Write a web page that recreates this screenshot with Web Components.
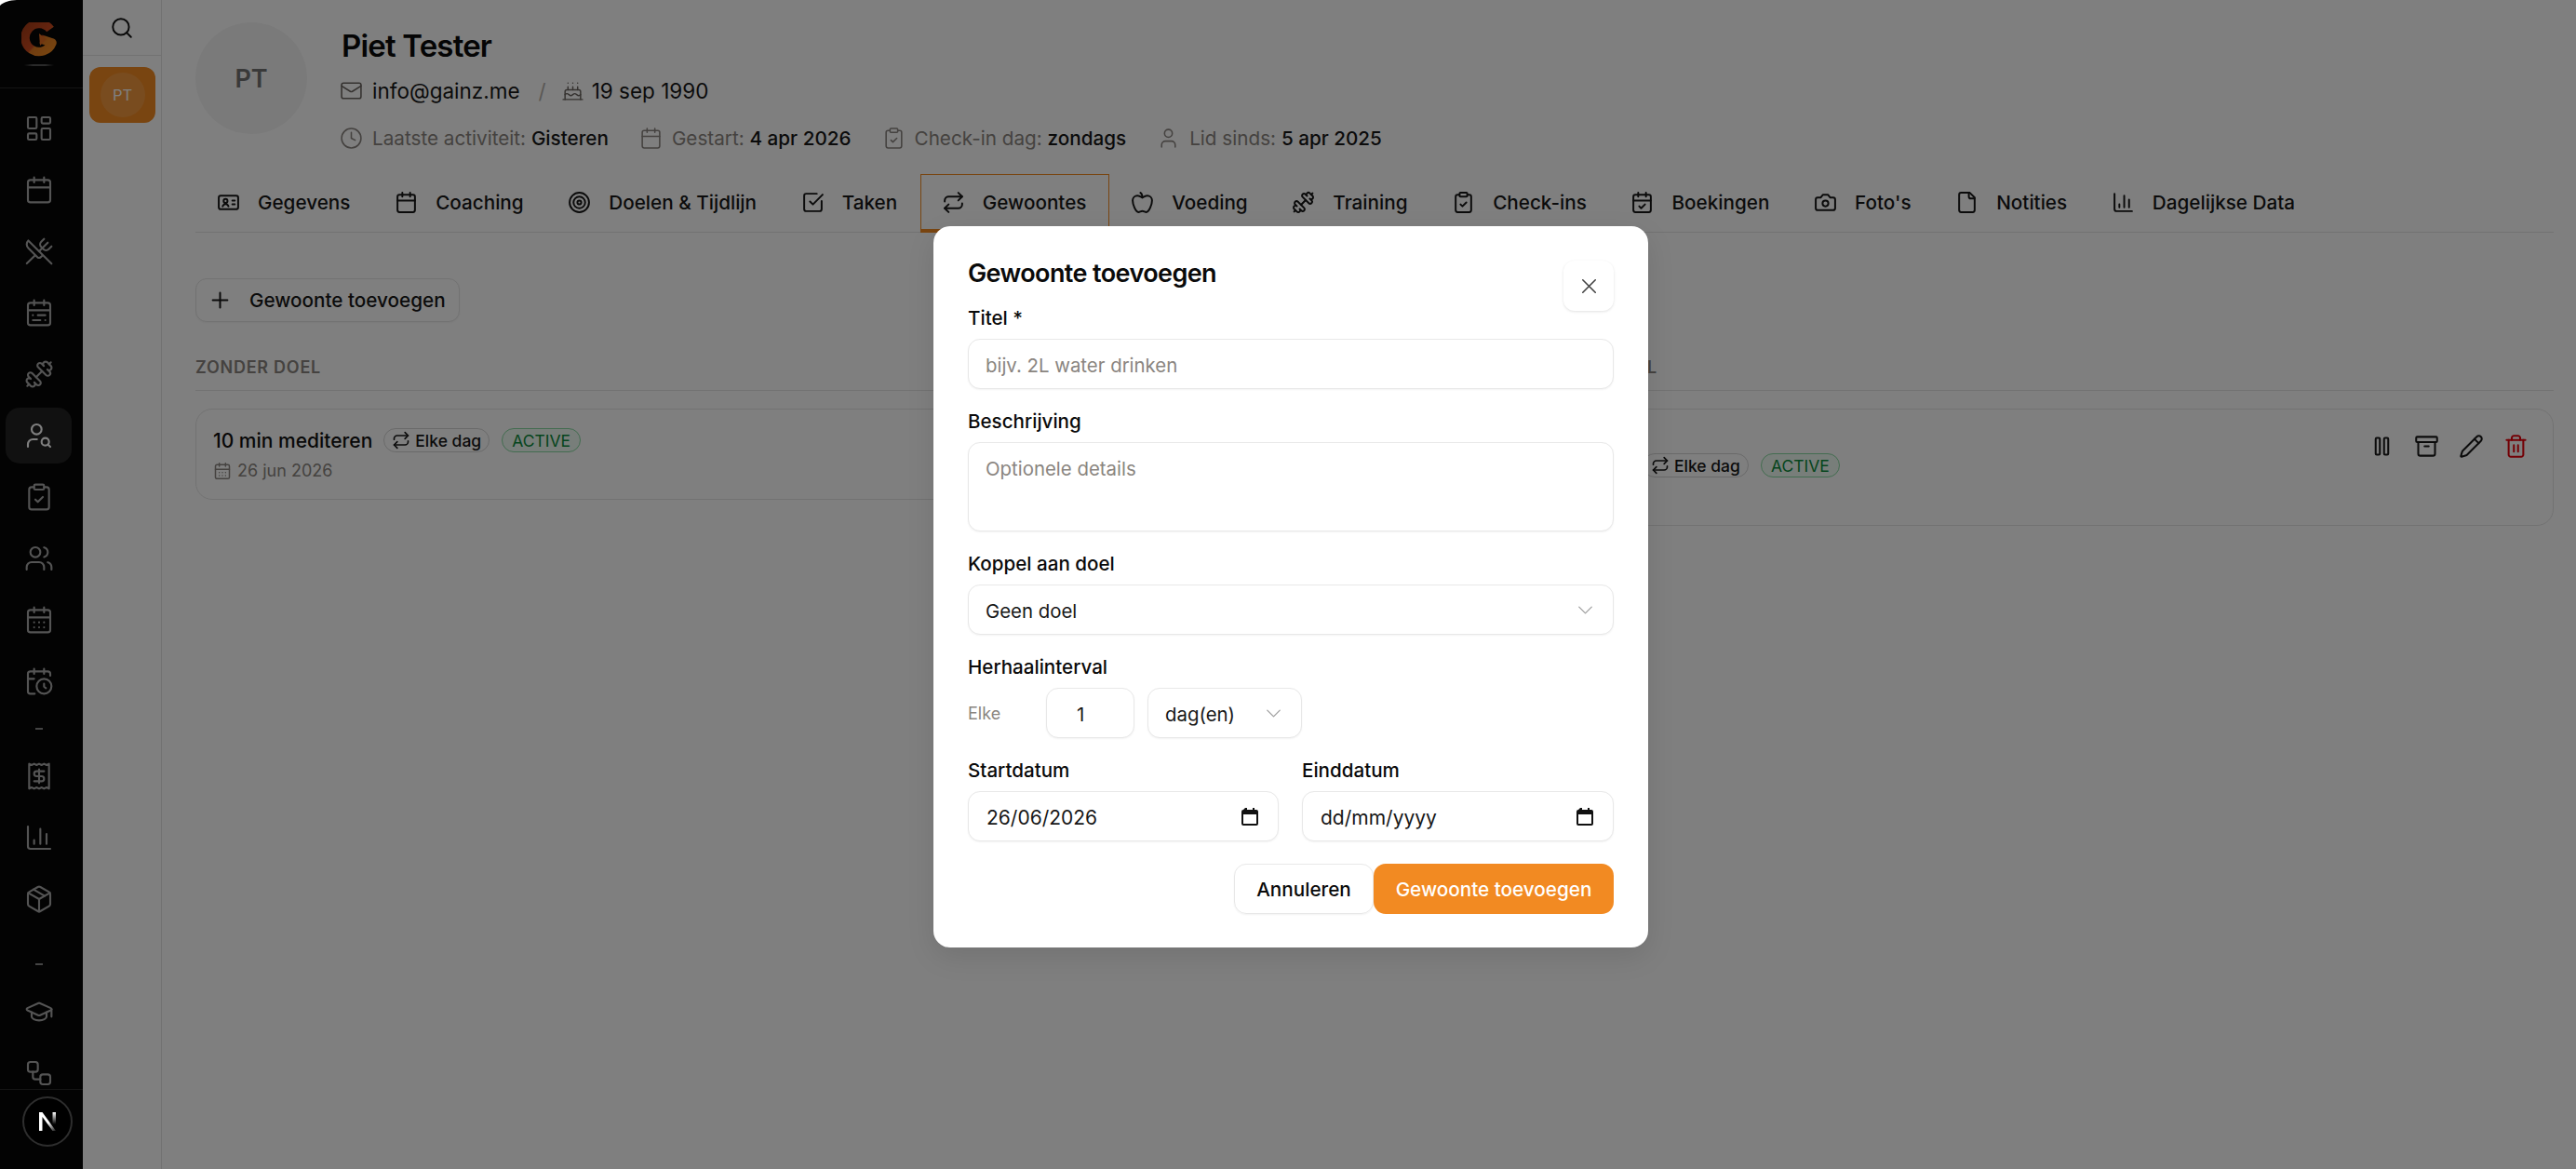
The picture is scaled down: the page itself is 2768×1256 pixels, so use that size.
<!DOCTYPE html>
<html lang="nl">
<head>
<meta charset="utf-8">
<title>Piet Tester</title>
<style>
  html, body { margin: 0; height: 100%; background: #fff; overflow: hidden; }
  body { font-family: Inter, "Liberation Sans", sans-serif; color: #111; }
</style>
</head>
<body>
<client-page></client-page>

<script>
(() => {
  // lucide style icons, 24 grid
  const ICONS = {
    dashboard: '<rect x="3" y="3" width="7" height="9" rx="1"/><rect x="14" y="3" width="7" height="5" rx="1"/><rect x="14" y="12" width="7" height="9" rx="1"/><rect x="3" y="16" width="7" height="5" rx="1"/>',
    calendar: '<path d="M8 2v4M16 2v4M3 10h18"/><rect x="3" y="4" width="18" height="18" rx="2"/>',
    utensils: '<path d="m16 2-2.3 2.3a3 3 0 0 0 0 4.2l1.8 1.8a3 3 0 0 0 4.2 0L22 8"/><path d="M15 15 3.3 3.3a4.2 4.2 0 0 0 0 6l7.3 7.3c.7.7 2 .7 2.8 0L15 15Zm0 0 7 7"/><path d="m2.1 21.8 6.4-6.3"/><path d="m19 5-7 7"/>',
    range: '<rect x="3" y="4" width="18" height="18" rx="2"/><path d="M16 2v4M3 10h18M8 2v4M17 14h-6M13 18H7M7 14h.01M17 18h.01"/>',
    dumbbell: '<g transform="matrix(-1 0 0 1 24 0)"><path d="M14.4 14.4 9.6 9.6"/><path d="M18.657 21.485a2 2 0 1 1-2.829-2.828l-1.767 1.768a2 2 0 1 1-2.829-2.829l6.364-6.364a2 2 0 1 1 2.829 2.829l-1.768 1.767a2 2 0 1 1 2.828 2.829z"/><path d="m21.5 21.5-1.4-1.4"/><path d="M3.9 3.9 2.5 2.5"/><path d="M6.404 12.768a2 2 0 1 1-2.829-2.829l1.768-1.767a2 2 0 1 1-2.828-2.829l2.828-2.828a2 2 0 1 1 2.829 2.828l1.767-1.768a2 2 0 1 1 2.829 2.829z"/></g>',
    usersearch: '<circle cx="10" cy="7" r="4"/><path d="M10.3 15H7a4 4 0 0 0-4 4v2"/><circle cx="17" cy="17" r="3"/><path d="m21 21-1.9-1.9"/>',
    clipcheck: '<rect x="8" y="2" width="8" height="4" rx="1"/><path d="M16 4h2a2 2 0 0 1 2 2v14a2 2 0 0 1-2 2H6a2 2 0 0 1-2-2V6a2 2 0 0 1 2-2h2"/><path d="m9 14 2 2 4-4"/>',
    users: '<path d="M16 21v-2a4 4 0 0 0-4-4H6a4 4 0 0 0-4 4v2"/><circle cx="9" cy="7" r="4"/><path d="M22 21v-2a4 4 0 0 0-3-3.87"/><path d="M16 3.13a4 4 0 0 1 0 7.75"/>',
    days: '<path d="M8 2v4M16 2v4M3 10h18"/><rect x="3" y="4" width="18" height="18" rx="2"/><path d="M8 14h.01M12 14h.01M16 14h.01M8 18h.01M12 18h.01M16 18h.01"/>',
    calclock: '<path d="M21 7.5V6a2 2 0 0 0-2-2H5a2 2 0 0 0-2 2v14a2 2 0 0 0 2 2h3.5"/><path d="M16 2v4M8 2v4M3 10h5"/><path d="M17.5 17.5 16 16.3V14"/><circle cx="16" cy="16" r="6"/>',
    receipt: '<path d="M4 2v20l2-1 2 1 2-1 2 1 2-1 2 1 2-1 2 1V2l-2 1-2-1-2 1-2-1-2 1-2-1-2 1Z"/><path d="M16 8h-6a2 2 0 1 0 0 4h4a2 2 0 1 1 0 4H8"/><path d="M12 17.5v-11"/>',
    chart: '<path d="M3 3v16a2 2 0 0 0 2 2h16"/><path d="M18 17V9M13 17V5M8 17v-3"/>',
    package: '<path d="M11 21.73a2 2 0 0 0 2 0l7-4A2 2 0 0 0 21 16V8a2 2 0 0 0-1-1.73l-7-4a2 2 0 0 0-2 0l-7 4A2 2 0 0 0 3 8v8a2 2 0 0 0 1 1.73z"/><path d="M12 22V12"/><path d="M3.29 7 12 12l8.71-5"/><path d="m7.5 4.27 9 5.15"/>',
    cap: '<path d="M21.42 10.922a1 1 0 0 0-.019-1.838L12.83 5.18a2 2 0 0 0-1.66 0L2.6 9.08a1 1 0 0 0 0 1.832l8.57 3.908a2 2 0 0 0 1.66 0z"/><path d="M22 10v6"/><path d="M6 12.5V16a6 3 0 0 0 12 0v-3.5"/>',
    workflow: '<rect x="3" y="3" width="8" height="8" rx="2"/><path d="M7 11v4a2 2 0 0 0 2 2h4"/><rect x="13" y="13" width="8" height="8" rx="2"/>',
    search: '<circle cx="11" cy="11" r="8"/><path d="m21 21-4.3-4.3"/>',
    mail: '<rect x="2" y="4" width="20" height="16" rx="2"/><path d="m22 7-8.97 5.7a1.94 1.94 0 0 1-2.06 0L2 7"/>',
    cake: '<path d="M20 21v-8a2 2 0 0 0-2-2H6a2 2 0 0 0-2 2v8"/><path d="M4 16s.5-1 2-1 2.5 2 4 2 2.5-2 4-2 2.5 2 4 2 2-1 2-1"/><path d="M2 21h20M7 8v3M12 8v3M17 8v3M7 4h.01M12 4h.01M17 4h.01"/>',
    clock: '<circle cx="12" cy="12" r="10"/><path d="M12 6v6l4 2"/>',
    user: '<path d="M19 21v-2a4 4 0 0 0-4-4H9a4 4 0 0 0-4 4v2"/><circle cx="12" cy="7" r="4"/>',
    idcard: '<rect x="2" y="5" width="20" height="14" rx="2"/><circle cx="9" cy="10.5" r="2"/><path d="M6 16c.4-1.500 1.500-2.200 3-2.200s2.600.7 3 2.200M16 10h2.500M16 14h2.500"/>',
    target: '<circle cx="12" cy="12" r="10"/><circle cx="12" cy="12" r="6"/><circle cx="12" cy="12" r="2"/>',
    checkbox: '<path d="M21 10.5V19a2 2 0 0 1-2 2H5a2 2 0 0 1-2-2V5a2 2 0 0 1 2-2h11"/><path d="m9 11 3 3L22 4"/>',
    repeat: '<path d="m17 2 4 4-4 4"/><path d="M3 11v-1a4 4 0 0 1 4-4h14"/><path d="m7 22-4-4 4-4"/><path d="M21 13v1a4 4 0 0 1-4 4H3"/>',
    apple: '<path d="M12 20.94c1.5 0 2.75 1.06 4 1.06 3 0 6-8 6-12.22A4.91 4.91 0 0 0 17 5c-2.22 0-4 1.44-5 2-1-.56-2.78-2-5-2a4.9 4.9 0 0 0-5 4.78C2 14 5 22 8 22c1.25 0 2.5-1.06 4-1.06Z"/><path d="M10 2c1 .5 2 2 2 5"/>',
    calcheck: '<path d="M8 2v4M16 2v4M3 10h18"/><rect x="3" y="4" width="18" height="18" rx="2"/><path d="m9 16 2 2 4-4"/>',
    camera: '<path d="M14.5 4h-5L7 7H4a2 2 0 0 0-2 2v9a2 2 0 0 0 2 2h16a2 2 0 0 0 2-2V9a2 2 0 0 0-2-2h-3l-2.5-3z"/><circle cx="12" cy="13" r="3"/>',
    file: '<path d="M15 2H6a2 2 0 0 0-2 2v16a2 2 0 0 0 2 2h12a2 2 0 0 0 2-2V7Z"/><path d="M14 2v4a2 2 0 0 0 2 2h4"/>',
    plus: '<path d="M5 12h14M12 5v14"/>',
    x: '<path d="M18 6 6 18M6 6l12 12"/>',
    chevron: '<path d="m6 9 6 6 6-6"/>',
    pause: '<rect x="14" y="4" width="4" height="16" rx="1"/><rect x="6" y="4" width="4" height="16" rx="1"/>',
    archive: '<rect x="2" y="3" width="20" height="5" rx="1"/><path d="M4 8v11a2 2 0 0 0 2 2h12a2 2 0 0 0 2-2V8"/><path d="M10 12h4"/>',
    pencil: '<path d="M21.174 6.812a1 1 0 0 0-3.986-3.987L3.842 16.174a2 2 0 0 0-.5.83l-1.321 4.352a.5.5 0 0 0 .623.622l4.353-1.32a2 2 0 0 0 .83-.497z"/><path d="m15 5 4 4"/>',
    trash: '<path d="M3 6h18"/><path d="M19 6v14c0 1-1 2-2 2H7c-1 0-2-1-2-2V6"/><path d="M8 6V4c0-1 1-2 2-2h4c1 0 2 1 2 2v2"/><path d="M10 11v6M14 11v6"/>'
  };

  class GIcon extends HTMLElement {
    connectedCallback() {
      const size = this.getAttribute('size') || 27;
      const sw = this.getAttribute('sw') || 1.8;
      this.attachShadow({mode: 'open'}).innerHTML = `
        <style>:host{display:inline-flex;flex:none;width:${size}px;height:${size}px}svg{width:100%;height:100%;display:block}</style>
        <svg viewBox="0 0 24 24" fill="none" stroke="currentColor" stroke-width="${sw}" stroke-linecap="round" stroke-linejoin="round">${ICONS[this.getAttribute('name')]}</svg>`;
    }
  }
  customElements.define('g-icon', GIcon);

  class AppSidebar extends HTMLElement {
    constructor() {
      super();
      const item = (n, active) => `<div class="item ${active ? 'active' : ''}"><g-icon name="${n}" size="32" sw="1.600"></g-icon></div>`;
      this.attachShadow({mode: 'open'}).innerHTML = `
      <style>
        :host { display:flex; flex-direction:column; flex:none; width:89px; height:100%; background:#060606; color:#a8a8a8; }
        .logo { height:95px; box-sizing:border-box; border-bottom:1px solid #2a2a2a; display:flex; flex-direction:column; align-items:center; padding:24px 5px 0 0; position:relative; }
        .logo i { position:absolute; top:69px; left:26px; width:32px; height:2px; background:linear-gradient(90deg,transparent,#555 30%,#555 70%,transparent); }
        .list { flex:1; min-height:0; overflow:hidden; display:flex; flex-direction:column; gap:6px; padding:13px 12px 0 6px; }
        .item { flex:none; height:60px; border-radius:15px; display:flex; align-items:center; justify-content:center; }
        .item.active { background:#222; color:#fff; }
        .sep { flex:none; height:30px; display:flex; align-items:center; justify-content:center; }
        .sep.low { height:49px; box-sizing:border-box; padding-top:33px; align-items:flex-start; }
        .sep i { display:block; width:8px; height:2px; background:#888; }
        .foot { flex:none; height:85px; border-top:1px solid #2a2a2a; }
      </style>
      <div class="logo">
        <svg width="38" height="38" viewBox="0 0 38 38">
          <defs><linearGradient id="lg" x1="0" y1="0" x2="1" y2="1"><stop offset="0" stop-color="#a83c16"/><stop offset=".55" stop-color="#cc4a20"/><stop offset=".6" stop-color="#e07a20"/><stop offset="1" stop-color="#f08a20"/></linearGradient></defs>
          <path fill="none" stroke="url(#lg)" stroke-width="9.500" stroke-linejoin="round" d="M31 7.500A15 15 0 1 0 33 22L21 18"/>
          <path fill="#e06a20" d="M19 12 27 18 20 25z"/>
        </svg>
        <i></i>
      </div>
      <div class="list">
        ${item('dashboard')}${item('calendar')}${item('utensils')}${item('range')}${item('dumbbell')}${item('usersearch', true)}${item('clipcheck')}${item('users')}${item('days')}${item('calclock')}
        <div class="sep"><i></i></div>
        ${item('receipt')}${item('chart')}${item('package')}
        <div class="sep low"><i></i></div>
        ${item('cap')}${item('workflow')}
      </div>
      <div class="foot"></div>`;
    }
  }
  customElements.define('app-sidebar', AppSidebar);

  class ClientRail extends HTMLElement {
    constructor() {
      super();
      this.attachShadow({mode: 'open'}).innerHTML = `
      <style>
        :host { display:flex; flex-direction:column; flex:none; width:85px; height:100%; box-sizing:border-box; border-right:1px solid #e5e5e5; background:#fff; }
        .top { height:60px; box-sizing:border-box; border-bottom:1px solid #e5e5e5; display:flex; align-items:center; justify-content:center; color:#111; }
        .chip { margin:12px 0 0 7px; width:71px; height:60px; border-radius:12px; background:#f28a22; display:flex; align-items:center; justify-content:center; }
        .av { width:48px; height:48px; border-radius:50%; background:#ffffff22; display:flex; align-items:center; justify-content:center; font-size:16.500px; font-weight:400; color:#fff; }
      </style>
      <div class="top"><g-icon name="search" size="26" sw="1.800"></g-icon></div>
      <div class="chip"><div class="av">PT</div></div>`;
    }
  }
  customElements.define('client-rail', ClientRail);

  class ClientHeader extends HTMLElement {
    constructor() {
      super();
      this.attachShadow({mode: 'open'}).innerHTML = `
      <style>
        :host { display:flex; gap:37px; height:187px; box-sizing:border-box; padding:24px 0 0 36px; }
        .avatar { width:120px; height:120px; border-radius:50%; background:#f5f5f5; color:#737373; display:flex; align-items:center; justify-content:center; font-size:27px; font-weight:600; flex:none; }
        h1 { margin:1px 0 0; font-size:33px; line-height:48px; font-weight:600; letter-spacing:-.825px; color:#0a0a0a; }
        .row { display:flex; align-items:center; }
        .contact { margin-top:1px; height:46px; font-size:22.500px; color:#171717; }
        .contact g-icon { color:#6b6560; margin:0 10px 0 -2px; }
        .contact g-icon + .slash + g-icon { margin-right:8px; }
        .slash { color:#b5b0aa; margin:0 18px 0 20px; }
        .meta { margin-top:10px; height:36px; font-size:20.700px; color:#8a8580; }
        .meta g-icon { margin:0 10px 0 -2px; }
        .meta span { margin-right:35px; white-space:pre; }
        .meta b { font-weight:500; color:#171717; }
      </style>
      <div class="avatar">PT</div>
      <div>
        <h1>Piet Tester</h1>
        <div class="row contact"><g-icon name="mail" size="25" sw="1.500"></g-icon>info@gainz.me<span class="slash">/</span><g-icon name="cake" size="25" sw="1.400"></g-icon>19 sep 1990</div>
        <div class="row meta">
          <g-icon name="clock" size="25" sw="1.500"></g-icon><span>Laatste activiteit: <b>Gisteren</b></span>
          <g-icon name="calendar" size="25" sw="1.500"></g-icon><span>Gestart: <b>4 apr 2026</b></span>
          <g-icon name="clipcheck" size="25" sw="1.500"></g-icon><span>Check-in dag: <b>zondags</b></span>
          <g-icon name="user" size="25" sw="1.500"></g-icon><span>Lid sinds: <b>5 apr 2025</b></span>
        </div>
      </div>`;
    }
  }
  customElements.define('client-header', ClientHeader);

  class TabItem extends HTMLElement {
    constructor() {
      super();
      this.attachShadow({mode: 'open'}).innerHTML = `
      <style>
        :host { display:flex; align-items:center; gap:19px; height:63px; box-sizing:border-box; padding:0 23.700px 3px 22px; border:1px solid transparent; border-bottom:0; font-size:20.700px; font-weight:500; color:#171717; white-space:nowrap; margin-bottom:-1px; }
        :host([active]) { border-color:#f28a22; box-shadow:inset 0 -4px 0 #f28a22; }
      </style>
      <g-icon name="${this.getAttribute('icon')}" size="25" sw="1.900"></g-icon><slot></slot>`;
    }
  }
  customElements.define('tab-item', TabItem);

  class TabBar extends HTMLElement {
    constructor() {
      super();
      this.attachShadow({mode: 'open'}).innerHTML = `
      <style>:host { display:flex; margin:0 24px 0 36px; border-bottom:1px solid #e5e5e5; height:63px; box-sizing:border-box; }</style>
      <slot></slot>`;
    }
  }
  customElements.define('tab-bar', TabBar);

  class StatusChip extends HTMLElement {
    constructor() {
      super();
      this.attachShadow({mode: 'open'}).innerHTML = `
      <style>
        :host { display:inline-flex; align-items:center; gap:5px; height:26px; box-sizing:border-box; padding:0 8px; border-radius:13px; border:1px solid #d4d4d4; font-size:17.500px; font-weight:500; color:#171717; }
        :host([green]) { border-color:#86d9a0; background:#f0fdf4; color:#0a8a3a; padding:0 10px; font-weight:400; }
      </style><slot></slot>`;
    }
  }
  customElements.define('status-chip', StatusChip);

  class HabitCard extends HTMLElement {
    constructor() {
      super();
      this.attachShadow({mode: 'open'}).innerHTML = `
      <style>
        :host { display:block; box-sizing:border-box; border:1px solid #e5e5e5; border-radius:18px; padding:20px 18px; position:relative; }
        .actions { display:flex; position:absolute; top:15px; right:16px; }
        .actions span { width:48px; height:48px; display:flex; align-items:center; justify-content:center; color:#171717; }
        .actions .del { color:#e7000b; }
        :host(:not([actions])) .actions { display:none; }
      </style>
      <slot></slot>
      <div class="actions">
        <span><g-icon name="pause"></g-icon></span><span><g-icon name="archive"></g-icon></span><span><g-icon name="pencil"></g-icon></span><span class="del"><g-icon name="trash"></g-icon></span>
      </div>`;
    }
  }
  customElements.define('habit-card', HabitCard);

  class HabitColumn extends HTMLElement {
    constructor() {
      super();
      const end = this.getAttribute('heading-end');
      this.attachShadow({mode: 'open'}).innerHTML = `
      <style>
        :host { display:block; }
        h2 { margin:0 0 19px; font-size:18px; line-height:48px; height:48px; font-weight:600; letter-spacing:.75px; color:#8a8580; border-bottom:1px solid #e5e5e5; white-space:nowrap; }
        h2 span { display:inline-block; ${end ? `width:${end}px; text-align:right;` : ''} }
      </style>
      <h2><span>${this.getAttribute('heading')}</span></h2><slot></slot>`;
    }
  }
  customElements.define('habit-column', HabitColumn);

  class HabitsPanel extends HTMLElement {
    constructor() {
      super();
      this.attachShadow({mode: 'open'}).innerHTML = `
      <style>
        :host { display:block; margin:0 24px 0 36px; padding-top:49px; }
        .add { display:inline-flex; align-items:center; gap:18px; height:47px; box-sizing:border-box; padding:0 14px 0 12px; border:1px solid #e5e5e5; border-radius:12px; background:#fff; font-size:20.700px; font-weight:500; color:#171717; box-shadow:0 1px 2px #0000000d; vertical-align:top; }
        .cols { display:grid; grid-template-columns:1fr 1fr; gap:36px; margin-top:25px; align-items:start; }
      </style>
      <div class="add"><g-icon name="plus"></g-icon>Gewoonte toevoegen</div>
      <div class="cols"><slot></slot></div>`;
    }
  }
  customElements.define('habits-panel', HabitsPanel);

  class FormField extends HTMLElement {
    constructor() {
      super();
      const label = this.getAttribute('label');
      this.attachShadow({mode: 'open'}).innerHTML = `
      <style>
        :host { display:block; }
        label { display:block; height:30px; line-height:30px; margin-bottom:7px; font-size:20.600px; font-weight:500; color:#0a0a0a; }
      </style>
      <label>${label}</label><slot></slot>`;
    }
  }
  customElements.define('form-field', FormField);

  class FormBox extends HTMLElement {
    constructor() {
      super();
      const kind = this.getAttribute('kind');
      const end = kind === 'select'
        ? '<g-icon name="chevron" sw="1.200" style="color:#a3a3a3"></g-icon>'
        : kind === 'date'
          ? '<svg width="22" height="22" viewBox="0 0 22 22"><path fill="#111" d="M6 2h2v2h6V2h2v2h2a2 2 0 0 1 2 2v13a2 2 0 0 1-2 2H4a2 2 0 0 1-2-2V6a2 2 0 0 1 2-2zM4 9v10h14V9z"/></svg>'
          : '';
      this.attachShadow({mode: 'open'}).innerHTML = `
      <style>
        :host { display:flex; align-items:center; justify-content:space-between; box-sizing:border-box; height:54px; padding:0 16px 0 18px; border:1.500px solid #e8e8e8; border-radius:13px; background:#fff; box-shadow:0 1px 2px #0000000d; font-size:20.400px; color:#171717; white-space:nowrap; }
        :host([muted]) { color:#8a8580; }
        :host([tall]) { height:96px; align-items:flex-start; padding-top:14px; }
        :host([kind="date"]) { font-size:21px; padding:0 19px 0 19px; }
        span { position:relative; top:1px; }
      </style>
      <span><slot></slot></span>${end}`;
    }
  }
  customElements.define('form-box', FormBox);

  class HabitDialog extends HTMLElement {
    constructor() {
      super();
      this.attachShadow({mode: 'open'}).innerHTML = `
      <style>
        :host { position:absolute; inset:0; background:#00000080; display:flex; align-items:flex-start; justify-content:center; }
        .modal { position:relative; width:768px; height:775px; margin:243px 0 0 6px; box-sizing:border-box; padding:33px 37px 0; background:#fff; border-radius:18px; box-shadow:0 10px 30px #0000001a; }
        h2 { margin:0 0 15px; font-size:27px; line-height:36px; font-weight:600; letter-spacing:-.6px; color:#0a0a0a; }
        .close { position:absolute; top:37px; right:37px; width:54px; height:54px; border-radius:12px; background:#fff; box-shadow:0 1px 3px #0000001f; display:flex; align-items:center; justify-content:center; color:#404040; }
        .fields { display:flex; flex-direction:column; gap:20px; }
        .interval { display:flex; align-items:center; }
        .interval em { width:84px; font-style:normal; font-size:18px; color:#8a8580; }
        .dates { display:grid; grid-template-columns:334px 335px; gap:25px; }
        .btns { display:flex; justify-content:flex-end; margin-top:24px; }
        .btn { height:54px; box-sizing:border-box; display:flex; align-items:center; justify-content:center; border-radius:13px; font-size:20.700px; font-weight:500; }
        .ghost { width:150px; border:1.500px solid #e8e8e8; color:#0a0a0a; box-shadow:0 1px 2px #0000000d; }
        .primary { width:258px; background:#f28a22; color:#fff; }
      </style>
      <div class="modal">
        <h2>Gewoonte toevoegen</h2>
        <div class="close"><g-icon name="x" sw="1.400"></g-icon></div>
        <div class="fields">
          <form-field label="Titel *"><form-box muted>bijv. 2L water drinken</form-box></form-field>
          <form-field label="Beschrijving"><form-box muted tall>Optionele details</form-box></form-field>
          <form-field label="Koppel aan doel"><form-box kind="select">Geen doel</form-box></form-field>
          <form-field label="Herhaalinterval">
            <div class="interval"><em>Elke</em><form-box style="width:95px;padding-left:32px">1</form-box><form-box kind="select" style="width:166px;margin-left:14px">dag(en)</form-box></div>
          </form-field>
          <div class="dates">
            <form-field label="Startdatum"><form-box kind="date">26/06/2026</form-box></form-field>
            <form-field label="Einddatum"><form-box kind="date">dd/mm/yyyy</form-box></form-field>
          </div>
        </div>
        <div class="btns"><div class="btn ghost">Annuleren</div><div class="btn primary">Gewoonte toevoegen</div></div>
      </div>`;
    }
  }
  customElements.define('habit-dialog', HabitDialog);

  class DevBadge extends HTMLElement {
    constructor() {
      super();
      this.attachShadow({mode: 'open'}).innerHTML = `
      <style>
        :host { position:absolute; left:24px; top:1178px; width:54px; height:54px; box-sizing:border-box; border-radius:50%; background:#000; border:2px solid #2e2e2e; display:flex; align-items:center; justify-content:center; }
      </style>
      <svg width="18" height="20" viewBox="0 0 18 20">
        <defs><linearGradient id="ng" x1="0" y1="0" x2="1" y2="1"><stop offset=".55" stop-color="#fff"/><stop offset="1" stop-color="#fff" stop-opacity=".1"/></linearGradient>
        <linearGradient id="nb" x1="0" y1="0" x2="0" y2="1"><stop offset="0" stop-color="#fff"/><stop offset="1" stop-color="#fff" stop-opacity="0"/></linearGradient></defs>
        <path fill="url(#ng)" d="M0 0h3.500L18 20h-3.500L3.500 5v15H0z"/><rect x="14.500" y="0" width="3.500" height="13" fill="url(#nb)"/>
      </svg>`;
    }
  }
  customElements.define('dev-badge', DevBadge);

  class ClientPage extends HTMLElement {
    constructor() {
      super();
      this.attachShadow({mode: 'open'}).innerHTML = `
      <style>
        :host { display:flex; position:relative; width:100vw; height:100vh; overflow:hidden; background:#fff; }
        main { flex:1; min-width:0; }
        .card-row { display:flex; align-items:center; gap:12px; }
        .card-row status-chip + status-chip { margin-left:1px; }
        .corner { position:absolute; left:0; top:0; }
      </style>
      <app-sidebar></app-sidebar>
      <client-rail></client-rail>
      <main>
        <client-header></client-header>
        <tab-bar>
          <tab-item icon="idcard">Gegevens</tab-item>
          <tab-item icon="calendar">Coaching</tab-item>
          <tab-item icon="target">Doelen &amp; Tijdlijn</tab-item>
          <tab-item icon="checkbox">Taken</tab-item>
          <tab-item icon="repeat" active>Gewoontes</tab-item>
          <tab-item icon="apple">Voeding</tab-item>
          <tab-item icon="dumbbell">Training</tab-item>
          <tab-item icon="clipcheck">Check-ins</tab-item>
          <tab-item icon="calcheck">Boekingen</tab-item>
          <tab-item icon="camera">Foto's</tab-item>
          <tab-item icon="file">Notities</tab-item>
          <tab-item icon="chart">Dagelijkse Data</tab-item>
        </tab-bar>
        <habits-panel>
          <habit-column heading="ZONDER DOEL">
            <habit-card style="height:98px">
              <div class="card-row" style="font-size:21px;font-weight:500;height:26px">10 min mediteren
                <status-chip><g-icon name="repeat" size="20" sw="2"></g-icon>Elke dag</status-chip><status-chip green>ACTIVE</status-chip>
              </div>
              <div style="display:flex;align-items:center;gap:6px;margin-top:9px;font-size:18px;color:#8a8580"><g-icon name="days" size="20" sw="1.800"></g-icon>26 jun 2026</div>
            </habit-card>
          </habit-column>
          <habit-column heading="GEKOPPELD AAN EEN DOEL" heading-end="286">
            <habit-card actions style="height:126px">
              <div class="card-row" style="margin:26px 0 0 251px;height:28px">
                <status-chip><g-icon name="repeat" size="20" sw="2"></g-icon>Elke dag</status-chip><status-chip green>ACTIVE</status-chip>
              </div>
            </habit-card>
          </habit-column>
        </habits-panel>
      </main>
      <habit-dialog></habit-dialog>
      <dev-badge></dev-badge>
      <svg class="corner" width="18" height="6" viewBox="0 0 18 6"><path fill="#fff" d="M0 0h18C10 .5 4 2 0 6z"/></svg>`;
    }
  }
  customElements.define('client-page', ClientPage);
})();
</script>
</body>
</html>
